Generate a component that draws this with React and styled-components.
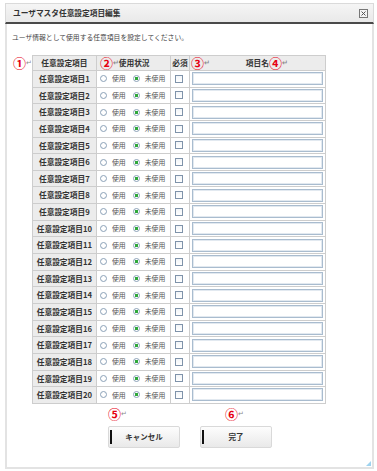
import styled, { createGlobalStyle } from 'styled-components';

const GlobalStyle = createGlobalStyle`
  html, body {
    margin: 0;
    padding: 0;
    background: #ffffff;
  }
  body {
    font-family: "Noto Sans CJK JP", "Liberation Sans", sans-serif;
    color: #333333;
  }
`;

const Dialog = styled.div`
  margin: 3px 0 0 5px;
  width: 369px;
  height: 466px;
  display: flex;
  flex-direction: column;
  box-sizing: border-box;
`;

const TitleBar = styled.div`
  height: 21px;
  box-sizing: border-box;
  display: flex;
  align-items: center;
  justify-content: space-between;
  padding: 0 5px 0 7px;
  background: linear-gradient(#f5f5f5, #e9e9e9);
  border: 1px solid #dadada;
  border-bottom: 2px solid #4a4a4a;
`;

const Title = styled.span`
  font-size: 7.7px;
  font-weight: bold;
  color: #333;
  line-height: 1;
`;

const Body = styled.div`
  flex: 1;
  position: relative;
  border: 2px solid #e3e3e3;
  border-top: none;
  padding: 8px 0 0 5px;
  display: flex;
  flex-direction: column;
`;

const Description = styled.p`
  margin: 0 0 13px;
  font-size: 6.8px;
  line-height: 10px;
  color: #444;
`;

const TableWrap = styled.div`
  display: flex;
  align-items: flex-start;
  margin-left: 1px;
`;

const Circled = styled.span`
  color: #e60012;
  font-size: 13px;
  font-weight: bold;
  line-height: 12px;
  font-family: "Noto Sans CJK JP", sans-serif;
`;

const Return = styled.span`
  color: #8a8a8a;
  font-size: 7px;
  line-height: 12px;
  font-family: "DejaVu Sans", sans-serif;
  margin-right: ${p => p.gap || 0}px;
`;

const Marker = styled.span`
  display: inline-flex;
  align-items: center;
  flex-shrink: 0;
  margin-top: ${p => p.top || 0}px;
  margin-left: ${p => p.left || 0}px;
`;

const Table = styled.table`
  border-collapse: collapse;
  table-layout: fixed;
  width: 293px;
  border: 1px solid #d2d2d2;
`;

const Col = styled.col`
  width: ${p => p.w}px;
`;

const Row = styled.tr`
  height: ${p => (p.head ? 15 : 16.65)}px;
`;

const HeadCell = styled.th`
  background: #ececec;
  border: 1px solid #cdcdcd;
  font-size: 7.7px;
  font-weight: bold;
  color: #333;
  padding: 0 ${p => p.pad || 0}px;
  text-align: ${p => p.align || 'center'};
  white-space: nowrap;
  line-height: 1;
`;

const HeadInner = styled.div`
  display: flex;
  align-items: center;
`;

const NameHead = styled.div`
  flex: 1;
  display: flex;
  align-items: center;
  justify-content: center;
`;

const LabelCell = styled.td`
  background: #ececec;
  border: 1px solid #cdcdcd;
  font-size: 7.7px;
  font-weight: bold;
  color: #333;
  text-align: center;
  white-space: nowrap;
  padding: 0;
  line-height: 1;
`;

const Cell = styled.td`
  border: 1px solid #cdcdcd;
  background: #fff;
  padding: 0 ${p => p.pad || 0}px;
  white-space: nowrap;
`;

const RadioGroup = styled.div`
  display: flex;
  align-items: center;
`;

const Radio = styled.span`
  width: 7px;
  height: 7px;
  box-sizing: border-box;
  border-radius: 50%;
  border: 1px solid #8da2b8;
  background: radial-gradient(circle, ${p => (p.checked ? '#2fa83a 0, #2fa83a 1.6px,' : '')} #ffffff 2px, #e8eef4 100%);
  flex-shrink: 0;
`;

const RadioLabel = styled.span`
  font-size: 6.9px;
  color: #555;
  line-height: 1;
  margin-left: 5px;
  margin-right: ${p => p.gap || 0}px;
`;

const Check = styled.span`
  display: block;
  width: 8px;
  height: 8px;
  box-sizing: border-box;
  border: 1px solid #7f93aa;
  background: linear-gradient(#f2f5f8, #ffffff);
`;

const TextInput = styled.div`
  height: 13px;
  box-sizing: border-box;
  border: 1px solid #a9bccf;
  box-shadow: inset 0 0 0 1px #e2e9f0;
  background: #fff;
`;

const Footer = styled.div`
  display: flex;
  justify-content: center;
  gap: 20px;
  margin-top: 4px;
  margin-right: 4px;
`;

const ButtonCol = styled.div`
  display: flex;
  flex-direction: column;
`;

const Button = styled.button`
  position: relative;
  margin-top: 6px;
  width: 72px;
  height: 22px;
  border: 1px solid #d9d9d9;
  border-radius: 2px;
  background: linear-gradient(#fdfdfd, #e9e9e9);
  font-family: "Noto Sans CJK JP", sans-serif;
  font-size: 7.5px;
  font-weight: bold;
  color: #333;
  padding: 0;
  cursor: pointer;

  &::before {
    content: '';
    position: absolute;
    left: 1px;
    top: 3px;
    bottom: 3px;
    width: 2px;
    background: #111;
  }
`;

const Grip = styled.span`
  position: absolute;
  right: 1px;
  bottom: 1px;
  width: 0;
  height: 0;
  border-left: 5px solid transparent;
  border-bottom: 5px solid #9fd3ef;
`;

const CloseIcon = () => (
  <svg width="9" height="9" viewBox="0 0 9 9">
    <rect x="0.5" y="0.5" width="8" height="8" fill="#f4f4f4" stroke="#777" />
    <path d="M2.5 2.5 L6.5 6.5 M6.5 2.5 L2.5 6.5" stroke="#555" strokeWidth="1" />
  </svg>
);

const Note = ({ n, gap, top, left }) => (
  <Marker top={top} left={left}>
    <Circled>{n}</Circled>
    <Return gap={gap}>↵</Return>
  </Marker>
);

const rows = Array.from({ length: 20 }, (_, i) => i + 1);

const App = () => (
  <>
    <GlobalStyle />
    <Dialog>
      <TitleBar>
        <Title>ユーザマスタ任意設定項目編集</Title>
        <CloseIcon />
      </TitleBar>
      <Body>
        <Description>ユーザ情報として使用する任意項目を設定してください。</Description>
        <TableWrap>
          <Note n="①" top={2} />
          <Table>
            <colgroup>
              <Col w={64} />
              <Col w={74} />
              <Col w={19} />
              <Col w={136} />
            </colgroup>
            <tbody>
              <Row head>
                <HeadCell>任意設定項目</HeadCell>
                <HeadCell align="left" pad={3}>
                  <HeadInner>
                    <Circled>②</Circled>
                    <Return>↵</Return>
                    使用状況
                  </HeadInner>
                </HeadCell>
                <HeadCell>必須</HeadCell>
                <HeadCell pad={1}>
                  <HeadInner>
                    <Circled>③</Circled>
                    <Return>↵</Return>
                    <NameHead>
                      項目名
                      <Circled>④</Circled>
                      <Return>↵</Return>
                    </NameHead>
                  </HeadInner>
                </HeadCell>
              </Row>
              {rows.map(n => (
                <Row key={n}>
                  <LabelCell>任意設定項目{n}</LabelCell>
                  <Cell pad={3}>
                    <RadioGroup>
                      <Radio />
                      <RadioLabel gap={7}>使用</RadioLabel>
                      <Radio checked />
                      <RadioLabel>未使用</RadioLabel>
                    </RadioGroup>
                  </Cell>
                  <Cell pad={4}>
                    <Check />
                  </Cell>
                  <Cell pad={2}>
                    <TextInput />
                  </Cell>
                </Row>
              ))}
            </tbody>
          </Table>
        </TableWrap>
        <Footer>
          <ButtonCol>
            <Note n="⑤" />
            <Button>キャンセル</Button>
          </ButtonCol>
          <ButtonCol>
            <Note n="⑥" left={25} />
            <Button>完了</Button>
          </ButtonCol>
        </Footer>
        <Grip />
      </Body>
    </Dialog>
  </>
);

export default App;
